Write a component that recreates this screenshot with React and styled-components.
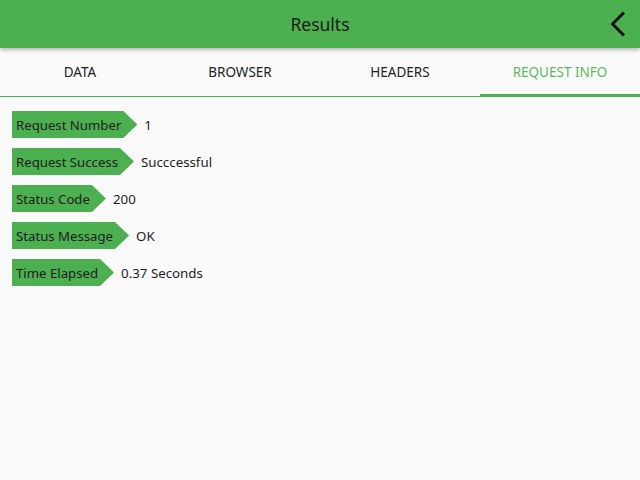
import React from "react";
import styled, { createGlobalStyle } from "styled-components";

const Global = createGlobalStyle`
  html, body { margin: 0; padding: 0; background: #fafafa; }
  body { font-family: "Noto Sans", "Open Sans", sans-serif; color: #212121; }
  #root { min-height: 480px; }
  * { box-sizing: border-box; }
`;

const Page = styled.div`
  width: 640px;
  height: 480px;
  background: #fafafa;
  display: flex;
  flex-direction: column;
  overflow: hidden;
`;

const AppBar = styled.header`
  position: relative;
  z-index: 2;
  height: 48px;
  flex: none;
  background: #4caf50;
  display: grid;
  grid-template-columns: 48px 1fr 48px;
  align-items: center;
  box-shadow: 0 2px 4px rgba(0, 0, 0, 0.28);
`;

const Title = styled.h1`
  grid-column: 2;
  margin: 0;
  text-align: center;
  font-size: 17.5px;
  font-weight: 400;
  color: #1b1b1b;
`;

const BackButton = styled.button`
  grid-column: 3;
  background: none;
  border: none;
  padding: 0;
  height: 48px;
  display: flex;
  align-items: center;
  justify-content: center;
  padding-left: 4px;
`;

const Tabs = styled.nav`
  display: grid;
  grid-template-columns: repeat(4, 1fr);
  height: 49px;
  flex: none;
  border-bottom: 1px solid #4caf50;
`;

const Tab = styled.div`
  display: flex;
  align-items: center;
  justify-content: center;
  font-size: 13.5px;
  text-transform: uppercase;
  color: ${(p) => (p.$active ? "#5cb860" : "#222")};
  box-shadow: ${(p) => (p.$active ? "inset 0 -2px 0 #4caf50" : "none")};
`;

const List = styled.div`
  display: flex;
  flex-direction: column;
  gap: 10px;
  padding: 14px 12px;
`;

const Row = styled.div`
  display: flex;
  align-items: center;
  height: 27px;
`;

const Tag = styled.div`
  height: 27px;
  background: #4caf50;
  display: flex;
  align-items: center;
  padding: 0 16px 0 4px;
  font-size: 13.2px;
  color: #1d1d1d;
  clip-path: polygon(0 0, calc(100% - 14px) 0, 100% 50%, calc(100% - 14px) 100%, 0 100%);
`;

const Value = styled.span`
  margin-left: 7px;
  font-size: 13.3px;
  color: #1d1d1d;
`;

const rows = [
  ["Request Number", "1"],
  ["Request Success", "Succcessful"],
  ["Status Code", "200"],
  ["Status Message", "OK"],
  ["Time Elapsed", "0.37 Seconds"],
];

export default function App() {
  return (
    <Page>
      <Global />
      <AppBar>
        <Title>Results</Title>
        <BackButton aria-label="Back">
          <svg width="16" height="26" viewBox="0 0 16 26">
            <path d="M14 1.5 L2.5 13 L14 24.5" fill="none" stroke="#111" strokeWidth="3" />
          </svg>
        </BackButton>
      </AppBar>
      <Tabs>
        <Tab>Data</Tab>
        <Tab>Browser</Tab>
        <Tab>Headers</Tab>
        <Tab $active>Request Info</Tab>
      </Tabs>
      <List>
        {rows.map(([k, v]) => (
          <Row key={k}>
            <Tag>{k}</Tag>
            <Value>{v}</Value>
          </Row>
        ))}
      </List>
    </Page>
  );
}
